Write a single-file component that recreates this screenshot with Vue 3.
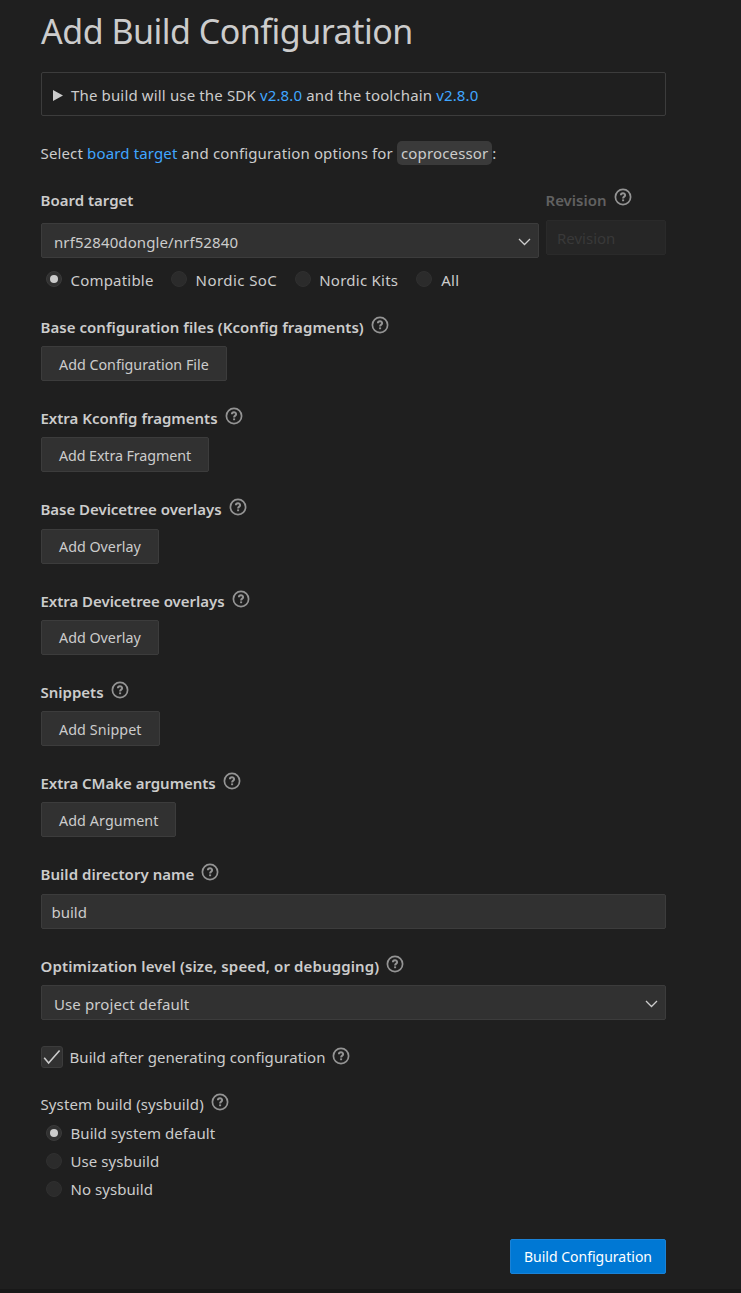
<script setup>
import { ref, h } from 'vue'

const HelpIcon = () =>
  h('svg', { width: 18, height: 18, viewBox: '0 0 18 18', fill: 'none', stroke: '#949494' }, [
    h('circle', { cx: 9, cy: 9, r: 7.6, 'stroke-width': 1.7 }),
    h('path', { d: 'M6.9 7.3C6.9 4.7 11.1 4.7 11.1 7.2C11.1 8.7 9.1 8.6 9.1 10.4', 'stroke-width': 2 }),
    h('path', { d: 'M9.1 11.4V13.2', 'stroke-width': 2 }),
  ])

const groups = [
  { id: 'base-conf', label: 'Base configuration files (Kconfig fragments)', button: 'Add Configuration File' },
  { id: 'extra-conf', label: 'Extra Kconfig fragments', button: 'Add Extra Fragment' },
  { id: 'base-dt', label: 'Base Devicetree overlays', button: 'Add Overlay' },
  { id: 'extra-dt', label: 'Extra Devicetree overlays', button: 'Add Overlay' },
  { id: 'snippets', label: 'Snippets', button: 'Add Snippet' },
  { id: 'cmake', label: 'Extra CMake arguments', button: 'Add Argument' },
]
const filters = [
  { id: 'compatible', label: 'Compatible' },
  { id: 'soc', label: 'Nordic SoC' },
  { id: 'kits', label: 'Nordic Kits' },
  { id: 'all', label: 'All' },
]
const sysbuildOptions = ['Build system default', 'Use sysbuild', 'No sysbuild']
const filter = ref('compatible')
const sysbuild = ref(sysbuildOptions[0])
</script>

<template>
  <main class="page">
    <h1>Add Build Configuration</h1>
    <div class="sdk">
      <svg class="tri" width="10" height="11" viewBox="0 0 10 11"><path d="M0 0L10 5.5L0 11Z" fill="#cccccc" /></svg>
      <span>The build will use the SDK <a>v2.8.0</a> and the toolchain <a>v2.8.0</a></span>
    </div>
    <p class="intro">Select <a>board target</a> and configuration options for <code>coprocessor</code>:</p>

    <div class="board">
      <div class="target">
        <div class="label"><span>Board target</span></div>
        <div class="select"><span>nrf52840dongle/nrf52840</span>
          <svg class="chev" width="13" height="8" viewBox="0 0 13 8"><path d="M1 1L6.5 6.5L12 1" fill="none" stroke="#cccccc" stroke-width="1.3" /></svg>
        </div>
      </div>
      <div class="revision">
        <div class="label"><span class="dim">Revision</span><HelpIcon class="help" /></div>
        <div class="field"><span>Revision</span></div>
      </div>
    </div>
    <div class="filters">
      <div v-for="f in filters" :key="f.id" class="option" :class="f.id" @click="filter = f.id">
        <i class="radio" :class="{ on: filter === f.id }"></i><span>{{ f.label }}</span>
      </div>
    </div>

    <section v-for="g in groups" :key="g.id" class="group" :class="g.id">
      <div class="label"><span>{{ g.label }}</span><HelpIcon class="help" /></div>
      <button><span>{{ g.button }}</span></button>
    </section>
    <section class="group builddir">
      <div class="label"><span>Build directory name</span><HelpIcon class="help" /></div>
      <div class="input"><span>build</span></div>
    </section>
    <section class="group optim">
      <div class="label"><span>Optimization level (size, speed, or debugging)</span><HelpIcon class="help" /></div>
      <div class="select"><span>Use project default</span>
        <svg class="chev" width="13" height="8" viewBox="0 0 13 8"><path d="M1 1L6.5 6.5L12 1" fill="none" stroke="#cccccc" stroke-width="1.3" /></svg>
      </div>
    </section>

    <div class="check">
      <i class="box"><svg width="18" height="16" viewBox="0 0 18 16"><path d="M1.2 8.8L5.6 14L16.6 1.5" fill="none" stroke="#cccccc" stroke-width="1.6" /></svg></i>
      <span>Build after generating configuration</span><HelpIcon class="help" />
    </div>
    <div class="sys-label"><span>System build (sysbuild)</span><HelpIcon class="help" /></div>
    <div class="sys-options">
      <div v-for="o in sysbuildOptions" :key="o" class="option" @click="sysbuild = o">
        <i class="radio" :class="{ on: sysbuild === o }"></i><span>{{ o }}</span>
      </div>
    </div>
    <div class="actions"><button class="primary"><span>Build Configuration</span></button></div>
  </main>
</template>

<style>
html, body { background: #1f1f1f; }
</style>
<style scoped>
.page { box-sizing: border-box; height: 1293px; padding: 0 75px 0 41px; background: #1f1f1f; border-bottom: 4px solid #181818; color: #cccccc; font: 15px/22px "Noto Sans", "Open Sans", sans-serif; overflow: hidden; white-space: nowrap; }
h1 { margin: 0; height: 72px; font-size: 34px; line-height: 63px; font-weight: 400; letter-spacing: -0.5px; }
a { color: #40a6ff; }
.sdk { box-sizing: border-box; height: 44px; border: 1px solid #3c3c3c; border-radius: 2px; display: flex; align-items: center; padding: 1px 0 0 11px; gap: 8.5px; letter-spacing: 0.15px; }
.tri { margin: 1px 0 0 -0.5px; }
.intro { margin: 24px 0 0 -0.5px; height: 26px; line-height: 26px; letter-spacing: 0.145px; }
code { font: inherit; background: #3a3a3a; border-radius: 5px; padding: 2px 4px 1.5px; }
.board { display: flex; gap: 7px; margin-top: 22px; height: 70px; }
.target { width: 498px; display: flex; flex-direction: column; justify-content: space-between; }
.revision { flex: 1; }
.label { display: flex; align-items: flex-start; gap: 7px; margin: -0.2px 0 0 -0.5px; height: 30.2px; line-height: 22px; font-weight: 600; }
.board .label { margin: 0 0 0 -0.5px; height: 32px; line-height: 24px; }
.help { flex: none; }
.dim { color: #616161; }
.select, .input, .field { box-sizing: border-box; height: 35px; border: 1px solid #3c3c3c; border-radius: 2px; background: #313131; display: flex; align-items: center; padding: 3px 7px 0 12px; justify-content: space-between; }
.select { letter-spacing: 0.1px; }
.input { padding: 1px 0 0 9.5px; }
.field { background: #262626; border-color: #2a2a2a; color: #393939; padding: 1px 0 0 10px; }
.filters { display: flex; height: 24px; margin-top: 10px; padding-left: 5px; }
.option { display: flex; align-items: center; gap: 8.5px; height: 24px; }
.filters .option { margin-right: 17.5px; letter-spacing: 0.2px; }
.filters .soc { letter-spacing: 0.43px; }
.filters .kits { letter-spacing: 0.25px; }
.filters .all { gap: 9.5px; }
.radio { box-sizing: border-box; width: 16px; height: 16px; border-radius: 50%; background: #2b2b2b; border: 1px solid #303030; display: flex; align-items: center; justify-content: center; flex: none; }
.radio.on { background: #313131; border-color: #3a3a3a; }
.radio.on::after { content: ""; width: 8px; height: 8px; border-radius: 50%; background: #cccccc; }
.filters .radio { margin-top: -3px; }
.group { height: 65px; margin-bottom: 26.25px; display: flow-root; }
.filters + .group { margin-top: 24px; }
.base-conf .label { letter-spacing: 0.05px; }
.base-dt .label, .extra-dt .label, .cmake .label { letter-spacing: -0.03px; }
.builddir .label { letter-spacing: 0.05px; }
.optim .label { letter-spacing: 0.12px; }
button { box-sizing: border-box; height: 35px; padding: 2px 17px 0; border: 1px solid #3c3c3c; border-radius: 2px; background: #313131; color: #cccccc; font: inherit; font-size: 14.3px; display: block; }
.extra-conf button { letter-spacing: -0.1px; }
.snippets button, .cmake button { letter-spacing: 0.09px; }
.check { display: flex; align-items: center; height: 22px; letter-spacing: 0.06px; }
.box { box-sizing: border-box; width: 22px; height: 22px; border: 1px solid #3c3c3c; border-radius: 3px; background: #313131; display: flex; align-items: center; justify-content: center; margin: -1px 6.5px 0 0; }
.check .help { margin: -2px 0 0 6.5px; }
.sys-label { display: flex; gap: 7px; margin: 25px 0 0 -0.5px; height: 26px; line-height: 23px; letter-spacing: 0.11px; }
.sys-options { padding-left: 5px; letter-spacing: 0.06px; }
.sys-options .option { height: 28.1px; }
.sys-options .radio { margin-top: 0.5px; }
.actions { display: flex; justify-content: flex-end; margin-top: 35.7px; }
.primary { background: #0078d4; border-color: #1a82d6; color: #fff; font-size: 14px; padding: 2px 13px 0; }
</style>
